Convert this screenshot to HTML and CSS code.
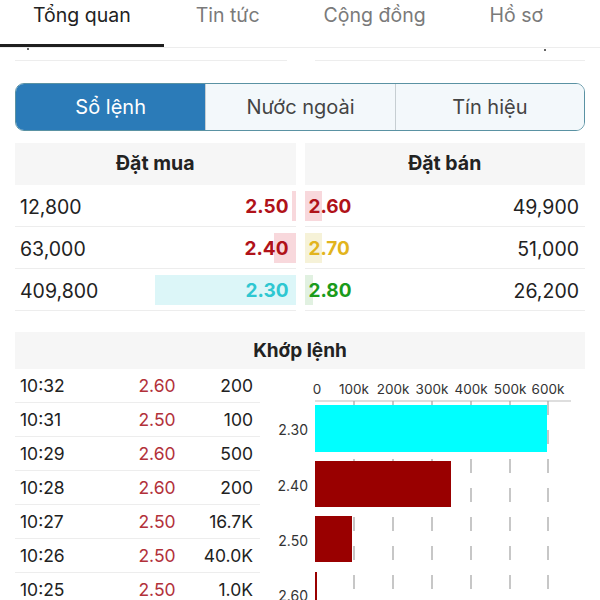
FILE: index.html
```html
<!DOCTYPE html>
<html lang="vi">

<head>
    <meta charset="UTF-8">
    <meta name="viewport" content="width=device-width, initial-scale=1.0">
    <title>Tổng quan</title>
    <link rel="stylesheet" href="styles.css">
</head>

<body>
    <nav class="tabs">
        <div class="tab active">Tổng quan</div>
        <div class="tab">Tin tức</div>
        <div class="tab">Cộng đồng</div>
        <div class="tab">Hồ sơ</div>
    </nav>

    <div class="prev">
        <div class="prev-card"><span class="dot dot-left"></span></div>
        <div class="prev-card"><span class="dot dot-right"></span></div>
    </div>

    <div class="segments">
        <div class="segment active">Sổ lệnh</div>
        <div class="segment">Nước ngoài</div>
        <div class="segment">Tín hiệu</div>
    </div>

    <section class="book">
        <div class="side buy">
            <div class="side-head">Đặt mua</div>
            <div class="row">
                <span class="bar bar-red" style="width: 4px"></span>
                <span class="vol">12,800</span>
                <span class="price red">2.50</span>
            </div>
            <div class="row">
                <span class="bar bar-red" style="width: 22px"></span>
                <span class="vol">63,000</span>
                <span class="price red">2.40</span>
            </div>
            <div class="row">
                <span class="bar bar-cyan" style="width: 141px"></span>
                <span class="vol">409,800</span>
                <span class="price cyan">2.30</span>
            </div>
        </div>
        <div class="side sell">
            <div class="side-head">Đặt bán</div>
            <div class="row">
                <span class="bar bar-red" style="width: 17px"></span>
                <span class="price red">2.60</span>
                <span class="vol">49,900</span>
            </div>
            <div class="row">
                <span class="bar bar-yellow" style="width: 17px"></span>
                <span class="price yellow">2.70</span>
                <span class="vol">51,000</span>
            </div>
            <div class="row">
                <span class="bar bar-green" style="width: 8px"></span>
                <span class="price green">2.80</span>
                <span class="vol">26,200</span>
            </div>
        </div>
    </section>

    <section class="matched">
        <div class="matched-head">Khớp lệnh</div>
        <div class="matched-body">
            <div class="trades">
                <div class="trade"><span>10:32</span><span class="t-price">2.60</span><span class="t-vol">200</span></div>
                <div class="trade"><span>10:31</span><span class="t-price">2.50</span><span class="t-vol">100</span></div>
                <div class="trade"><span>10:29</span><span class="t-price">2.60</span><span class="t-vol">500</span></div>
                <div class="trade"><span>10:28</span><span class="t-price">2.60</span><span class="t-vol">200</span></div>
                <div class="trade"><span>10:27</span><span class="t-price">2.50</span><span class="t-vol">16.7K</span></div>
                <div class="trade"><span>10:26</span><span class="t-price">2.50</span><span class="t-vol">40.0K</span></div>
                <div class="trade"><span>10:25</span><span class="t-price">2.50</span><span class="t-vol">1.0K</span></div>
            </div>

            <svg class="chart" width="325" height="231" viewBox="0 0 325 231">
                <g class="axis-labels">
                    <text x="57" y="25">0</text>
                    <text x="94" y="25">100k</text>
                    <text x="133" y="25">200k</text>
                    <text x="172" y="25">300k</text>
                    <text x="211" y="25">400k</text>
                    <text x="250" y="25">500k</text>
                    <text x="288" y="25">600k</text>
                </g>
                <line class="axis" x1="55" y1="32" x2="311" y2="32" />
                <g class="grid">
                    <line x1="94" y1="32" x2="94" y2="231" />
                    <line x1="133" y1="32" x2="133" y2="231" />
                    <line x1="172" y1="32" x2="172" y2="231" />
                    <line x1="211" y1="32" x2="211" y2="231" />
                    <line x1="250" y1="32" x2="250" y2="231" />
                    <line x1="288" y1="32" x2="288" y2="231" />
                </g>
                <rect x="55" y="36" width="232" height="47" fill="#00ffff" />
                <rect x="55" y="92" width="136" height="46" fill="#990000" />
                <rect x="55" y="147" width="37" height="46" fill="#990000" />
                <rect x="55" y="203" width="2" height="46" fill="#990000" />
                <g class="cat-labels">
                    <text x="48" y="66">2.30</text>
                    <text x="48" y="122">2.40</text>
                    <text x="48" y="177">2.50</text>
                    <text x="48" y="232">2.60</text>
                </g>
            </svg>
        </div>
    </section>
</body>

</html>
```

FILE: styles.css
```css
:root {
    --text: #222222;
    --muted: #7a7a7a;
    --head-bg: #f6f6f6;
    --line: #ededed;
    --blue: #2b7bb8;
    --red: #b01219;
}

body {
    margin: 0;
    padding: 0;
    width: 600px;
    height: 600px;
    overflow: hidden;
    background: #ffffff;
    color: var(--text);
    font-family: Inter, "Liberation Sans", sans-serif;
}

/* top tabs */
.tabs {
    display: flex;
    height: 48px;
    border-bottom: 1px solid var(--line);
    box-sizing: border-box;
}

.tab {
    height: 47px;
    padding: 0 32px;
    line-height: 30px;
    font-size: 19.5px;
    color: var(--muted);
    box-sizing: border-box;
}

.tab.active {
    padding: 0 33px;
    color: var(--text);
    border-bottom: 3px solid #1f1f1f;
}

/* remains of the block scrolled under the tabs */
.prev {
    display: grid;
    grid-template-columns: 272px 270px;
    justify-content: space-between;
    padding: 0 15px;
}

.prev-card {
    height: 12px;
    border-bottom: 1px solid var(--line);
}

.dot {
    display: block;
    width: 2px;
    height: 2px;
    border-radius: 1px;
    background: #333;
}

.dot-left {
    margin-left: 12px;
}

.dot-right {
    margin-left: 229px;
    margin-top: 1px;
}

/* segmented control */
.segments {
    display: grid;
    grid-template-columns: 1fr 1fr 1fr;
    height: 48px;
    margin: 22px 15px 0;
    border: 1.5px solid #5a92a3;
    border-radius: 9px;
    overflow: hidden;
    box-sizing: border-box;
}

.segment {
    display: flex;
    align-items: center;
    justify-content: center;
    background: #f3f8fb;
    color: #444;
    font-size: 20px;
    border-left: 1px solid #c6ced2;
}

.segment.active {
    background: var(--blue);
    color: #ffffff;
    border-left: none;
}

/* order book */
.book {
    display: grid;
    grid-template-columns: 1fr 1fr;
    gap: 9px;
    margin: 12px 15px 0;
}

.side-head {
    height: 42px;
    line-height: 40px;
    text-align: center;
    font-size: 19.5px;
    font-weight: 700;
    background: var(--head-bg);
}

.row {
    position: relative;
    display: flex;
    justify-content: space-between;
    align-items: center;
    height: 42px;
    padding-top: 2px;
    border-bottom: 1px solid var(--line);
    box-sizing: border-box;
    font-size: 19.5px;
}

.buy .row {
    padding-left: 5px;
    padding-right: 7px;
}

.sell .row {
    padding-left: 4px;
    padding-right: 6px;
}

.bar {
    position: absolute;
    top: 6px;
    bottom: 5px;
}

.buy .bar {
    right: 0;
}

.sell .bar {
    left: 0;
}

.bar-red {
    background: #f8d8dc;
}

.bar-cyan {
    background: #dcf6f8;
}

.bar-yellow {
    background: #f6f2d8;
}

.bar-green {
    background: #e1f1e1;
}

.vol,
.price {
    position: relative;
}

.price {
    font-size: 19px;
    font-weight: 700;
}

.red {
    color: var(--red);
}

.cyan {
    color: #2ec7d1;
}

.yellow {
    color: #e2b41d;
}

.green {
    color: #1b9b1b;
}

/* matched orders */
.matched {
    margin: 21px 15px 0;
}

.matched-head {
    height: 37px;
    line-height: 37px;
    text-align: center;
    font-size: 19px;
    font-weight: 700;
    background: var(--head-bg);
}

.matched-body {
    display: flex;
    margin-left: -15px;
    margin-right: -15px;
    padding-left: 15px;
}

.trades {
    width: 245px;
    flex-shrink: 0;
}

.trade {
    display: grid;
    grid-template-columns: 95px 84px 1fr;
    align-items: center;
    height: 34px;
    padding: 0 7px 0 5px;
    border-bottom: 1px solid var(--line);
    box-sizing: border-box;
    font-size: 17.5px;
}

.t-price {
    text-align: center;
    color: #b2313a;
}

.t-vol {
    text-align: right;
}

.chart {
    display: block;
    flex-shrink: 0;
}

.axis-labels text {
    font-family: Inter, "Liberation Sans", sans-serif;
    font-size: 13.5px;
    fill: #333;
    text-anchor: middle;
}

.cat-labels text {
    font-family: Inter, "Liberation Sans", sans-serif;
    font-size: 14px;
    fill: #333;
    text-anchor: end;
}

.axis {
    stroke: #bdbdbd;
    stroke-width: 1.2;
}

.grid line {
    stroke: #aaaaaa;
    stroke-width: 1.3;
    stroke-dasharray: 14 15;
}
```
